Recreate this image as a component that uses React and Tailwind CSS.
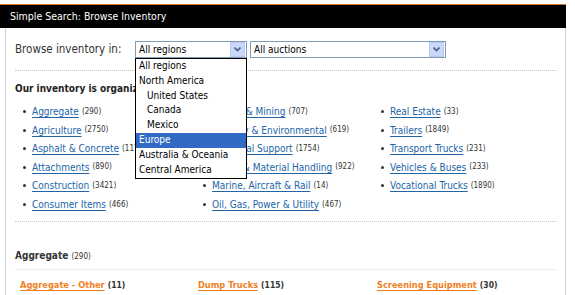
const col1 = [
  ['Aggregate', 290],
  ['Agriculture', 2750],
  ['Asphalt & Concrete', 1172],
  ['Attachments', 890],
  ['Construction', 3421],
  ['Consumer Items', 466],
];
const col2 = [
  ['Quarry & Mining', 707],
  ['Forestry & Environmental', 619],
  ['Industrial Support', 1754],
  ['Lifting & Material Handling', 922],
  ['Marine, Aircraft & Rail', 14],
  ['Oil, Gas, Power & Utility', 467],
];
const col3 = [
  ['Real Estate', 33],
  ['Trailers', 1849],
  ['Transport Trucks', 231],
  ['Vehicles & Buses', 233],
  ['Vocational Trucks', 1890],
];

const regions = [
  ['All regions', false],
  ['North America', false],
  ['United States', true],
  ['Canada', true],
  ['Mexico', true],
  ['Europe', false],
  ['Australia & Oceania', false],
  ['Central America', false],
];

const font = { fontFamily: '"DejaVu Sans Condensed", "DejaVu Sans", sans-serif' };

const Arrow = () => (
  <span className="flex h-[15px] w-[15px] items-center justify-center border border-[#b8c9ef] bg-[#c9d8fb]">
    <svg width="7" height="5" viewBox="0 0 7 5">
      <path d="M0.5 0.5 L3.5 3.5 L6.5 0.5" fill="none" stroke="#4d6185" strokeWidth="1.6" />
    </svg>
  </span>
);

const Select = ({ label, className }) => (
  <div className={`flex h-[17px] shrink-0 items-center justify-between border border-[#7f9db9] bg-white pl-[3px] pr-px text-[10px] text-black ${className}`}>
    <span>{label}</span>
    <Arrow />
  </div>
);

const Column = ({ items, className }) => (
  <ul className={`flex flex-col ${className}`}>
    {items.map(([name, n]) => (
      <li key={name} className="flex h-[18.6px] items-center whitespace-nowrap">
        <span className="mr-[6px] h-[3px] w-[3px] rounded-full bg-[#333]" />
        <a href="#" className="text-[10px] text-[#2164a8] underline decoration-[#2164a8] underline-offset-2">
          {name}
        </a>
        <span className="ml-[3px] text-[8px] text-[#333]">({n})</span>
      </li>
    ))}
  </ul>
);

export default function App() {
  return (
    <div className="h-[295px] w-[575px] overflow-hidden bg-white pt-[4px]" style={font}>
      <div className="w-[566px] border-t-[1.5px] border-[#d9731f] bg-black py-[5px] pl-[10px] text-[10.5px] leading-[13px] text-white">
        Simple Search: Browse Inventory
      </div>
      <div className="ml-[5px] w-[561px] border-x border-l-[#cfcfcf] border-r-[#d4d4d4] pl-[8px] pr-[8px] pb-6">
        <div className="relative flex items-center pt-[13px]">
          <span className="w-[121px] shrink-0 whitespace-nowrap pl-px text-[11.5px] text-[#333]">Browse inventory in:</span>
          <Select label="All regions" className="w-[112px]" />
          <Select label="All auctions" className="ml-[3px] w-[196px]" />
          <div className="absolute left-[121px] top-[30px] z-10 w-[112px] border border-black bg-white pb-px text-[10px] leading-[14.8px] text-black">
            {regions.map(([r, indent]) => (
              <div
                key={r}
                className={`${indent ? 'pl-[11px]' : 'pl-[3px]'} ${r === 'Europe' ? 'bg-[#316ac5] text-white' : ''}`}
              >
                {r}
              </div>
            ))}
          </div>
        </div>
        <div className="ml-px mt-[12px] border-t border-dotted border-[#c4c4c4]" />
        <p className="ml-px mt-[11px] text-[10px] font-bold leading-[13px] text-[#222]">Our inventory is organized by category:</p>
        <div className="mt-[7px] flex pl-[9px]">
          <Column items={col1} className="w-[180px]" />
          <Column items={col2} className="w-[178px]" />
          <Column items={col3} />
        </div>
        <div className="ml-px mt-[7px] border-t border-dotted border-[#c4c4c4]" />
        <p className="ml-px mt-[27px] text-[10px] font-bold leading-[13px] text-[#333]">
          Aggregate <span className="text-[8px] font-normal">(290)</span>
        </p>
        <div className="ml-px mt-[6px] border-t border-[#eeeeee]" />
        <div className="mt-[8px] flex pl-[6px] text-[9.2px] font-bold">
          {[
            ['Aggregate - Other', 11, 'w-[178px]'],
            ['Dump Trucks', 115, 'w-[179px]'],
            ['Screening Equipment', 30, ''],
          ].map(([name, n, w]) => (
            <div key={name} className={w}>
              <a href="#" className="text-[#f07f1f] underline underline-offset-2">{name}</a>
              <span className="ml-[3px] text-[8.5px] text-[#333]">({n})</span>
            </div>
          ))}
        </div>
      </div>
    </div>
  );
}
